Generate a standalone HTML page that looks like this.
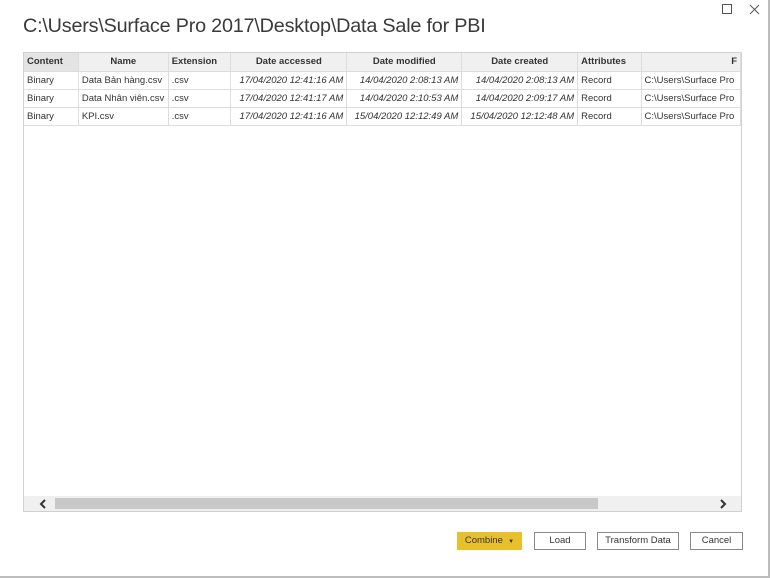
<!DOCTYPE html>
<html><head><style>
body{margin:0;width:771px;height:578px;background:#fff;position:relative;overflow:hidden;font-family:"Liberation Sans",sans-serif;}
.win{position:absolute;left:0;top:0;width:768px;height:576px;border-right:2px solid #bdbdbd;border-bottom:2px solid #bdbdbd;box-sizing:content-box}
.title{position:absolute;left:23px;top:15px;font-size:19.8px;color:#3a3a3a;font-weight:normal;letter-spacing:-0.2px}
.tbl{position:absolute;left:23px;top:52px;width:719px;height:460px;border:1px solid #d0d0d0;box-sizing:border-box;overflow:hidden}
table{border-collapse:collapse;font-size:9.5px;color:#333;table-layout:fixed;white-space:nowrap}
td,th{height:18px;padding:0 3px;border-right:1px solid #ddd;border-bottom:1px solid #ddd;overflow:hidden;box-sizing:border-box}
th{background:#f0f0f0;font-weight:bold;text-align:center;color:#333}
th.c0{background:#e4e4e4;text-align:left}
td.i{font-style:italic;text-align:right}
.sb{position:absolute;left:0;bottom:0;width:717px;height:15px;background:#f0f0f0}
.thumb{position:absolute;left:31px;top:2px;width:543px;height:11px;background:#c8c8c8}
.btn{position:absolute;top:532px;height:18px;border:1px solid #8a8a8a;box-sizing:border-box;font-size:9.5px;text-align:center;line-height:16px;color:#333;background:#fff}
</style></head><body>
<div class="win"></div>
<div class="title">C:\Users\Surface Pro 2017\Desktop\Data Sale for PBI</div>
<svg style="position:absolute;left:722px;top:4px" width="44" height="12"><rect x="0.5" y="0.5" width="9" height="9" fill="none" stroke="#555"/><path d="M28 1l9 9M37 1l-9 9" stroke="#555"/></svg>
<div class="tbl">
<table>
<colgroup><col style="width:57px"><col style="width:90px"><col style="width:65px"><col style="width:117px"><col style="width:116px"><col style="width:117px"><col style="width:66px"><col style="width:100px"></colgroup>
<tr><th class="c0">Content</th><th>Name</th><th style="text-align:left">Extension</th><th>Date accessed</th><th>Date modified</th><th>Date created</th><th style="text-align:left">Attributes</th><th style="text-align:right">F</th></tr>
<tr><td>Binary</td><td>Data Bản hàng.csv</td><td>.csv</td><td class="i">17/04/2020 12:41:16 AM</td><td class="i">14/04/2020 2:08:13 AM</td><td class="i">14/04/2020 2:08:13 AM</td><td>Record</td><td>C:\Users\Surface Pro</td></tr>
<tr><td>Binary</td><td>Data Nhân viên.csv</td><td>.csv</td><td class="i">17/04/2020 12:41:17 AM</td><td class="i">14/04/2020 2:10:53 AM</td><td class="i">14/04/2020 2:09:17 AM</td><td>Record</td><td>C:\Users\Surface Pro</td></tr>
<tr><td>Binary</td><td>KPI.csv</td><td>.csv</td><td class="i">17/04/2020 12:41:16 AM</td><td class="i">15/04/2020 12:12:49 AM</td><td class="i">15/04/2020 12:12:48 AM</td><td>Record</td><td>C:\Users\Surface Pro</td></tr>
</table>
<div class="sb"><div class="thumb"></div>
<svg style="position:absolute;left:15px;top:3px" width="8" height="10"><path d="M6 1L2 5l4 4" stroke="#333" stroke-width="2" fill="none"/></svg>
<svg style="position:absolute;left:695px;top:3px" width="8" height="10"><path d="M2 1l4 4-4 4" stroke="#333" stroke-width="2" fill="none"/></svg>
</div>
</div>
<div class="btn" style="left:457px;width:65px;background:#e8c02e;border-color:#e8c02e">Combine &nbsp;<span style="font-size:6px">▼</span></div>
<div class="btn" style="left:534px;width:52px">Load</div>
<div class="btn" style="left:597px;width:82px">Transform Data</div>
<div class="btn" style="left:690px;width:53px">Cancel</div>
</body></html>
